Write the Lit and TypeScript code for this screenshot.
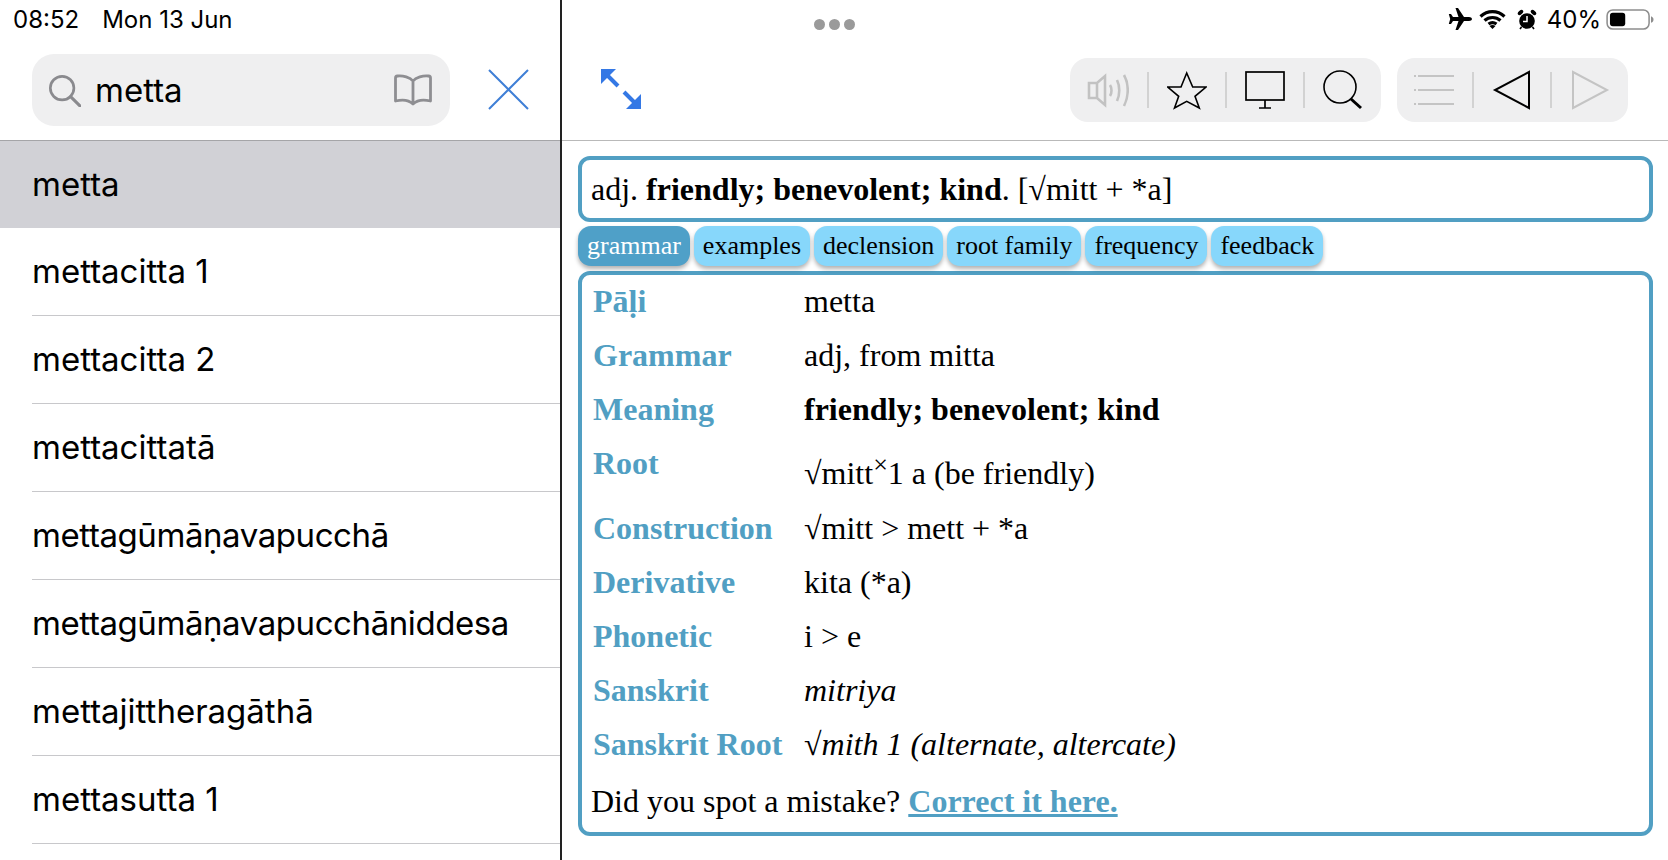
import { LitElement, html, css, svg } from "lit";
import { customElement } from "lit/decorators.js";

const WORDS = [
  "metta",
  "mettacitta 1",
  "mettacitta 2",
  "mettacittatā",
  "mettagūmāṇavapucchā",
  "mettagūmāṇavapucchāniddesa",
  "mettajittheragāthā",
  "mettasutta 1",
];

const TABS = ["grammar", "examples", "declension", "root family", "frequency", "feedback"];

const SEARCH = svg`<circle cx="16" cy="16" r="12.5" /><path d="M25 25l10 10" stroke-width="3.2" />`;

@customElement("app-root")
export class AppRoot extends LitElement {
  static styles = css`
    :host {
      display: block;
      width: 1668px;
      height: 860px;
      overflow: hidden;
      background: #fff;
      color: #000;
    }
    .screen {
      display: flex;
      height: 860px;
    }
    .sidebar {
      width: 560px;
      flex: none;
      border-right: 2px solid #222;
      font-family: Inter, "Liberation Sans", sans-serif;
      overflow: hidden;
    }
    .status {
      height: 54px;
      display: flex;
      font-family: Inter, "Liberation Sans", sans-serif;
      font-size: 24px;
    }
    .clock {
      padding: 5px 0 0 13px;
      display: flex;
      gap: 23px;
      height: 30px;
    }
    .searchbar {
      height: 87px;
      box-sizing: border-box;
      border-bottom: 1px solid #a5a5a8;
      display: flex;
      padding-left: 32px;
    }
    .field {
      width: 418px;
      height: 72px;
      border-radius: 22px;
      background: #efeff0;
      display: flex;
      align-items: center;
      box-sizing: border-box;
      padding: 0 18px 0 15px;
      font-size: 33px;
    }
    .field span {
      flex: 1;
      padding-left: 14px;
    }
    .close {
      margin: 15px 0 0 38px;
    }
    .row {
      height: 88px;
      box-sizing: border-box;
      margin-left: 32px;
      border-bottom: 1px solid #c8c8cb;
      font-size: 33px;
      display: flex;
      align-items: center;
      padding-bottom: 1px;
      white-space: nowrap;
    }
    .row.selected {
      margin-left: 0;
      padding-left: 32px;
      background: #d1d1d6;
      border-bottom: none;
      height: 87px;
    }
    .row.tight {
      letter-spacing: -0.42px;
    }
    .detail {
      flex: 1;
      min-width: 0;
    }
    .status.right {
      justify-content: space-between;
      padding-right: 14px;
    }
    .dots {
      display: flex;
      gap: 4px;
      margin: 19px 0 0 252px;
      height: 11px;
    }
    .dots i {
      width: 11px;
      height: 11px;
      border-radius: 50%;
      background: #9a9a9a;
    }
    .indicators {
      display: flex;
      align-items: center;
      height: 38px;
      gap: 9px;
    }
    .wifi {
      margin: 0 2px 0 -2px;
    }
    .percent {
      margin: 0 -4px 0 1px;
    }
    .toolbar {
      height: 87px;
      box-sizing: border-box;
      border-bottom: 1px solid #b9b9b9;
      display: flex;
      align-items: flex-start;
      padding: 4px 40px 0 38px;
      gap: 16px;
    }
    .expand {
      margin: 10px auto 0 0;
    }
    .group {
      height: 64px;
      border-radius: 18px;
      background: #efeff0;
      display: flex;
      align-items: center;
      padding: 0 18px 0 17px;
      gap: 18px;
    }
    .group .sep {
      width: 2px;
      height: 36px;
      background: #d2d2d2;
    }
    .group svg {
      display: block;
    }
    .dict {
      padding: 15px 15px 0 16px;
      font-family: "Liberation Serif", "Times New Roman", serif;
      font-size: 32px;
    }
    .summary {
      height: 66px;
      box-sizing: border-box;
      border: 4px solid #519fc3;
      border-radius: 12px;
      display: flex;
      align-items: center;
      padding: 1px 0 0 9px;
    }
    .tabs {
      display: flex;
      gap: 4px;
      margin-top: 4px;
    }
    .tab {
      height: 40px;
      box-sizing: border-box;
      padding: 0 9px;
      border-radius: 13px;
      background: #87d7fb;
      font-size: 26px;
      display: flex;
      align-items: center;
      white-space: nowrap;
      box-shadow: 0 3px 4px rgba(0, 0, 0, 0.3);
    }
    .tab.active {
      background: #4fa0c8;
      color: #fff;
    }
    .panel {
      margin-top: 5px;
      height: 565px;
      box-sizing: border-box;
      border: 4px solid #519fc3;
      border-radius: 12px;
      padding: 3px 9px 0 9px;
    }
    .grid {
      display: grid;
      grid-template-columns: 211px 1fr;
      padding-left: 2px;
    }
    .grid > div {
      height: 54px;
      line-height: 46px;
      white-space: nowrap;
    }
    .grid > .label {
      color: #519fc3;
      font-weight: bold;
    }
    .grid > .tall {
      height: 65px;
    }
    .grid > .lower {
      line-height: 66px;
    }
    sup {
      font-size: 26px;
      line-height: 0;
      vertical-align: 11px;
    }
    .report {
      margin-top: 3px;
      line-height: 46px;
    }
    .report a {
      color: #519fc3;
      font-weight: bold;
      text-decoration: underline;
    }
  `;

  rows() {
    const items: [string, unknown][] = [
      ["Pāḷi", "metta"],
      ["Grammar", "adj, from mitta"],
      ["Meaning", html`<b>friendly; benevolent; kind</b>`],
      ["Root", html`√mitt<sup>×</sup>1 a (be friendly)`],
      ["Construction", "√mitt > mett + *a"],
      ["Derivative", "kita (*a)"],
      ["Phonetic", "i > e"],
      ["Sanskrit", html`<i>mitriya</i>`],
      ["Sanskrit Root", html`√<i>mith 1 (alternate, altercate)</i>`],
    ];
    return items.map(([label, value]) => {
      const tall = label === "Root";
      return html`<div class="label ${tall ? "tall" : ""}">${label}</div>
        <div class="${tall ? "tall lower" : ""}">${value}</div>`;
    });
  }

  render() {
    return html`
      <div class="screen">
        <div class="sidebar">
          <div class="status">
            <div class="clock"><span>08:52</span><span>Mon 13 Jun</span></div>
          </div>
          <div class="searchbar">
            <div class="field">
              <svg width="34" height="34" viewBox="0 0 36 36" fill="none" stroke="#8a8a8e" stroke-width="2.8" stroke-linecap="round">${SEARCH}</svg>
              <span>metta</span>
              <svg width="38" height="32" viewBox="0 0 38 32" fill="none" stroke="#8e8e92" stroke-width="2.8" stroke-linejoin="round">
                <path d="M19 7C16 3 9 1.500 3.500 2 2 2.200 1.500 3 1.500 4v23c6-1.500 13-1.500 17.500 3 4.500-4.500 11.500-4.500 17.500-3V4c0-1-.5-1.800-2-2C29 1.500 22 3 19 7zM19 7v22" />
              </svg>
            </div>
            <svg class="close" width="41" height="41" viewBox="0 0 41 41" stroke="#3f7fd6" stroke-width="2">
              <path d="M1 1l39 39M40 1L1 40" />
            </svg>
          </div>
          ${WORDS.map(
            (w, i) =>
              html`<div class="row ${i === 0 ? "selected" : ""} ${w.includes("ū") ? "tight" : ""}">${w}</div>`
          )}
        </div>
        <div class="detail">
          <div class="status right">
            <div class="dots"><i></i><i></i><i></i></div>
            <div class="indicators">
              <svg width="24" height="22" viewBox="0 0 24 22"><path d="M24 11c0-1.200-1.500-2-3-2h-5L10 0H7.500l3 9H5L3 6H.8l1.400 5L.8 16H3l2-3h5.500l-3 9H10l6-9h5c1.500 0 3-.8 3-2z" /></svg>
              <svg class="wifi" width="27" height="20" viewBox="0 0 27 20" fill="none" stroke="#000" stroke-width="3.200">
                <path d="M1.500 7.500c7-6.500 17-6.500 24 0M5.500 11.500c4.500-4 11.500-4 16 0M9.500 15c2.500-1.800 5.500-1.800 8 0" />
                <path d="M13.500 20l-3-3c1.800-1.200 4.200-1.200 6 0z" fill="#000" stroke="none" />
              </svg>
              <svg width="20" height="21" viewBox="0 0 20 21">
                <circle cx="10" cy="12" r="7.800" />
                <ellipse cx="3.500" cy="3.500" rx="3.200" ry="1.900" transform="rotate(-40 3.500 3.500)" />
                <ellipse cx="16.500" cy="3.500" rx="3.200" ry="1.900" transform="rotate(40 16.500 3.500)" />
                <path d="M4.500 18l-1.500 2M15.500 18l1.500 2" stroke="#000" stroke-width="1.600" />
                <path d="M10 7v5.500H6" fill="none" stroke="#fff" stroke-width="1.500" />
              </svg>
              <span class="percent">40%</span>
              <svg width="48" height="21" viewBox="0 0 50 22">
                <rect x="1" y="1" width="44" height="20" rx="6" fill="none" stroke="#8d8d8d" stroke-width="1.600" />
                <rect x="4" y="4" width="16" height="14" rx="3" />
                <path d="M47 7.500c2 .8 2.600 2 2.600 3.500s-.6 2.700-2.600 3.500z" fill="#8d8d8d" />
              </svg>
            </div>
          </div>
          <div class="toolbar">
            <svg class="expand" width="42" height="42" viewBox="0 0 42 42" fill="#3478e5" stroke="none">
              <path d="M1 1h15L1 16z" />
              <path d="M6 6l12 12" stroke="#3478e5" stroke-width="4" />
              <path d="M41 41H26l15-15z" />
              <path d="M36 36L24 24" stroke="#3478e5" stroke-width="4" />
            </svg>
            <div class="group">
              <svg width="42" height="36" viewBox="0 0 42 36" fill="none" stroke="#c2c2c2" stroke-width="2.600">
                <path d="M2 11h8l8-7v29l-8-7H2zM10 11v15" />
                <path d="M23 13c2 3 2 8 0 11M30 8c3 6 3 15 0 21" />
                <path d="M37 3c5 9 5 21 0 31" />
              </svg>
              <div class="sep"></div>
              <svg width="40" height="40" viewBox="0 0 40 40" fill="none" stroke="#000" stroke-width="1.600" stroke-linejoin="miter">
                <path d="M19.700 3l6 14H39L28 26.300 32.300 38l-12.600-6.700L7.500 38l4.200-11.700L.7 17H14z" />
              </svg>
              <div class="sep"></div>
              <svg width="40" height="40" viewBox="0 0 40 40" fill="none" stroke="#000" stroke-width="1.700">
                <rect x="1" y="2" width="38" height="28" />
                <path d="M20 30v8M14 38h12" />
              </svg>
              <div class="sep"></div>
              <svg width="40" height="40" viewBox="0 0 40 40" fill="none" stroke="#000" stroke-width="1.600">
                <circle cx="17" cy="17" r="16" />
                <path d="M28 29l10 9" stroke-width="3" />
              </svg>
            </div>
            <div class="group">
              <svg width="40" height="36" viewBox="0 0 40 36" stroke="#c4c4c4" stroke-width="1.800">
                <path d="M4 4h36M4 18h36M4 32h36M0 4h2M0 18h2M0 32h2" />
              </svg>
              <div class="sep"></div>
              <svg width="40" height="40" viewBox="0 0 40 40" fill="none" stroke="#000" stroke-width="2">
                <path d="M37 2v36L3 20z" />
              </svg>
              <div class="sep"></div>
              <svg width="40" height="40" viewBox="0 0 40 40" fill="none" stroke="#c4c4c4" stroke-width="2">
                <path d="M3 2v36l34-18z" />
              </svg>
            </div>
          </div>
          <div class="dict">
            <div class="summary">
              <span>adj. <b>friendly; benevolent; kind</b>. [√mitt + *a]</span>
            </div>
            <div class="tabs">
              ${TABS.map(
                (t, i) => html`<div class="tab ${i === 0 ? "active" : ""}">${t}</div>`
              )}
            </div>
            <div class="panel">
              <div class="grid">${this.rows()}</div>
              <div class="report">Did you spot a mistake? <a href="#">Correct it here.</a></div>
            </div>
          </div>
        </div>
      </div>
    `;
  }
}
